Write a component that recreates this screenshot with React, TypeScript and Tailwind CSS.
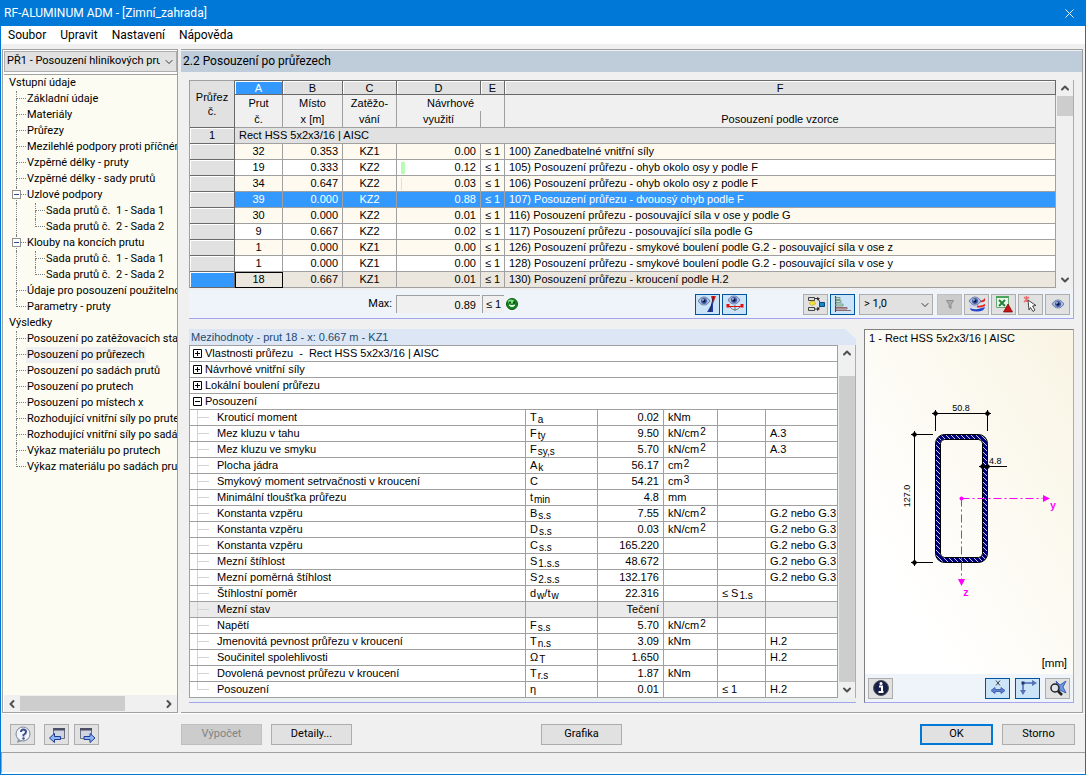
import type { ReactNode } from 'react'
import { ChevronDown, ChevronLeft, ChevronRight, ChevronUp, X } from 'lucide-react'
import clsx from 'clsx'

type TreeNode = { label: string; level: 0 | 1 | 2; last?: boolean; open?: boolean; selected?: boolean }

const tree: TreeNode[] = [
  { label: 'Vstupní údaje', level: 0 },
  { label: 'Základní údaje', level: 1 },
  { label: 'Materiály', level: 1 },
  { label: 'Průřezy', level: 1 },
  { label: 'Mezilehlé podpory proti příčnému vybočení', level: 1 },
  { label: 'Vzpěrné délky - pruty', level: 1 },
  { label: 'Vzpěrné délky - sady prutů', level: 1 },
  { label: 'Uzlové podpory', level: 1, open: true },
  { label: 'Sada prutů č.  1 - Sada 1', level: 2 },
  { label: 'Sada prutů č.  2 - Sada 2', level: 2, last: true },
  { label: 'Klouby na koncích prutu', level: 1, open: true },
  { label: 'Sada prutů č.  1 - Sada 1', level: 2 },
  { label: 'Sada prutů č.  2 - Sada 2', level: 2, last: true },
  { label: 'Údaje pro posouzení použitelnosti', level: 1 },
  { label: 'Parametry - pruty', level: 1, last: true },
  { label: 'Výsledky', level: 0 },
  { label: 'Posouzení po zatěžovacích stavech', level: 1 },
  { label: 'Posouzení po průřezech', level: 1, selected: true },
  { label: 'Posouzení po sadách prutů', level: 1 },
  { label: 'Posouzení po prutech', level: 1 },
  { label: 'Posouzení po místech x', level: 1 },
  { label: 'Rozhodující vnitřní síly po prutech', level: 1 },
  { label: 'Rozhodující vnitřní síly po sadách prutů', level: 1 },
  { label: 'Výkaz materiálu po prutech', level: 1 },
  { label: 'Výkaz materiálu po sadách prutů', level: 1, last: true },
]

const rows = [
  { member: 32, x: '0.353', lc: 'KZ1', ratio: '0.00', bar: 0, text: '100) Zanedbatelné vnitřní síly' },
  { member: 19, x: '0.333', lc: 'KZ2', ratio: '0.12', bar: 4, text: '105) Posouzení průřezu - ohyb okolo osy y podle F' },
  { member: 34, x: '0.647', lc: 'KZ2', ratio: '0.03', bar: 1, text: '106) Posouzení průřezu - ohyb okolo osy z podle F' },
  { member: 39, x: '0.000', lc: 'KZ2', ratio: '0.88', bar: 0, text: '107) Posouzení průřezu - dvouosý ohyb podle F' },
  { member: 30, x: '0.000', lc: 'KZ2', ratio: '0.01', bar: 0, text: '116) Posouzení průřezu - posouvající síla v ose y podle G' },
  { member: 9, x: '0.667', lc: 'KZ2', ratio: '0.02', bar: 0, text: '117) Posouzení průřezu - posouvající síla podle G' },
  { member: 1, x: '0.000', lc: 'KZ1', ratio: '0.00', bar: 0, text: '126) Posouzení průřezu - smykové boulení podle G.2 - posouvající síla v ose z' },
  { member: 1, x: '0.000', lc: 'KZ1', ratio: '0.00', bar: 0, text: '128) Posouzení průřezu - smykové boulení podle G.2 - posouvající síla v ose y' },
  { member: 18, x: '0.667', lc: 'KZ1', ratio: '0.01', bar: 0, text: '130) Posouzení průřezu - kroucení podle H.2' },
]

type Detail = { name: string; sym?: ReactNode; value: string; unit?: ReactNode; limit?: ReactNode; ref?: string; shaded?: boolean }

const Sub = ({ children }: { children: ReactNode }) => (
  <span className="relative top-0.5 ml-px text-[10px]">{children}</span>
)
const Sup = ({ children }: { children: ReactNode }) => (
  <span className="relative -top-0.5 ml-px text-[10px]">{children}</span>
)
const kNcm2 = <>kN/cm<Sup>2</Sup></>

const details: Detail[] = [
  { name: 'Krouticí moment', sym: <>T<Sub>a</Sub></>, value: '0.02', unit: 'kNm' },
  { name: 'Mez kluzu v tahu', sym: <>F<Sub>ty</Sub></>, value: '9.50', unit: kNcm2, ref: 'A.3' },
  { name: 'Mez kluzu ve smyku', sym: <>F<Sub>sy,s</Sub></>, value: '5.70', unit: kNcm2, ref: 'A.3' },
  { name: 'Plocha jádra', sym: <>A<Sub>k</Sub></>, value: '56.17', unit: <>cm<Sup>2</Sup></> },
  { name: 'Smykový moment setrvačnosti v kroucení', sym: 'C', value: '54.21', unit: <>cm<Sup>3</Sup></> },
  { name: 'Minimální tloušťka průřezu', sym: <>t<Sub>min</Sub></>, value: '4.8', unit: 'mm' },
  { name: 'Konstanta vzpěru', sym: <>B<Sub>s.s</Sub></>, value: '7.55', unit: kNcm2, ref: 'G.2 nebo G.3' },
  { name: 'Konstanta vzpěru', sym: <>D<Sub>s.s</Sub></>, value: '0.03', unit: kNcm2, ref: 'G.2 nebo G.3' },
  { name: 'Konstanta vzpěru', sym: <>C<Sub>s.s</Sub></>, value: '165.220', ref: 'G.2 nebo G.3' },
  { name: 'Mezní štíhlost', sym: <>S<Sub>1.s.s</Sub></>, value: '48.672', ref: 'G.2 nebo G.3' },
  { name: 'Mezní poměrná štíhlost', sym: <>S<Sub>2.s.s</Sub></>, value: '132.176', ref: 'G.2 nebo G.3' },
  { name: 'Štíhlostní poměr', sym: <>d<Sub>w</Sub>/t<Sub>w</Sub></>, value: '22.316', limit: <>≤ S<Sub>1.s</Sub></> },
  { name: 'Mezní stav', value: 'Tečení', shaded: true },
  { name: 'Napětí', sym: <>F<Sub>s.s</Sub></>, value: '5.70', unit: kNcm2 },
  { name: 'Jmenovitá pevnost průřezu v kroucení', sym: <>T<Sub>n.s</Sub></>, value: '3.09', unit: 'kNm', ref: 'H.2' },
  { name: 'Součinitel spolehlivosti', sym: <>Ω<Sub>T</Sub></>, value: '1.650', ref: 'H.2' },
  { name: 'Dovolená pevnost průřezu v kroucení', sym: <>T<Sub>r.s</Sub></>, value: '1.87', unit: 'kNm' },
  { name: 'Posouzení', sym: 'η', value: '0.01', limit: '≤ 1', ref: 'H.2' },
]

function IconButton({ label, active, disabled, children }: { label: string; active?: boolean; disabled?: boolean; children: ReactNode }) {
  return (
    <button
      type="button"
      aria-label={label}
      disabled={disabled}
      className={clsx(
        'flex h-[21px] w-[25px] shrink-0 items-center justify-center border',
        active && 'border-[#00549c] bg-[#cce4f7]',
        disabled && 'border-[#bfbfbf] bg-[#cccccc]',
        !active && !disabled && 'border-[#adadad] bg-[#e1e1e1]',
      )}
    >
      <svg width="20" height="18" viewBox="0 0 20 18" fill="none">
        {children}
      </svg>
    </button>
  )
}

function PushButton({ children, primary, disabled, wide }: { children: ReactNode; primary?: boolean; disabled?: boolean; wide?: boolean }) {
  return (
    <button
      type="button"
      disabled={disabled}
      className={clsx(
        'h-[21px] shrink-0',
        wide ? 'w-[81px]' : 'w-[73px]',
        primary ? 'border-2 border-[#0078d7] bg-[#e1e1e1]' : 'border',
        !primary && (disabled ? 'border-[#bfbfbf] bg-[#cccccc] text-[#838383]' : 'border-[#adadad] bg-[#e1e1e1]'),
      )}
    >
      {children}
    </button>
  )
}

function Eye({ x, y }: { x: number; y: number }) {
  return (
    <g transform={`translate(${x} ${y})`}>
      <path d="M0 4C2 1 4 0 6 0s4 1 6 4c-2 3-4 4-6 4S2 7 0 4z" fill="#a9bbdf" stroke="#5d6c98" strokeWidth=".8" />
      <circle cx="6" cy="4" r="3" fill="#3f5fae" />
      <circle cx="6" cy="4" r="1.500" fill="#0a1230" />
      <circle cx="5" cy="3" r=".8" fill="#fff" />
    </g>
  )
}

function Tree() {
  return (
    <ul className="min-h-0 flex-1 overflow-hidden bg-[#fcfcf3]">
      {tree.map((node, i) => (
        <li key={i} className={clsx('flex h-4 whitespace-pre leading-4', node.level === 0 ? 'pl-1' : 'pl-3')}>
          {node.level === 2 && <span className="w-[19px] shrink-0 border-l border-dotted border-[#808080]" />}
          {node.level > 0 && (
            <span className="relative w-[10px] shrink-0">
              <span className="block h-2 border-b border-l border-dotted border-[#808080]" />
              {!node.last && <span className="block h-2 border-l border-dotted border-[#808080]" />}
              {node.open && (
                <button type="button" aria-label="Sbalit" className="absolute -left-1 top-[3px] flex size-[9px] items-center justify-center border border-[#919191] bg-white">
                  <span className="h-px w-[5px] bg-[#2b4ba0]" />
                </button>
              )}
            </span>
          )}
          <a href="#" className={clsx('shrink-0 px-px', node.selected && 'bg-[#f0f0f0]')}>
            {node.label}
          </a>
        </li>
      ))}
    </ul>
  )
}

function VScroll({ thumb }: { thumb: 'short' | 'long' }) {
  return (
    <div className="ml-px flex w-4 shrink-0 flex-col items-center bg-[#f0f0f0] text-[#505050]">
      <ChevronUp size={12} strokeWidth={4} className="my-0.5 shrink-0" />
      {thumb === 'short' ? (
        <div className="h-5 w-full bg-[#cdcdcd]" />
      ) : (
        <div className="mt-[15px] w-full flex-1 bg-[#cdcdcd]" />
      )}
      {thumb === 'short' && <div className="flex-1" />}
      <ChevronDown size={12} strokeWidth={4} className="my-0.5 shrink-0" />
    </div>
  )
}

const letter = 'h-[15px] border-y border-r border-[#696969] font-normal leading-3 shadow-[inset_1px_1px_0_#fff]'
const head = 'border-r border-[#a0a0a0] bg-[#f0f0f0] font-normal leading-4'

function ResultsTable() {
  return (
    <table className="w-full min-w-0 flex-1 table-fixed border-separate border-spacing-0 border-l border-[#a0a0a0] text-center">
      <colgroup>
        <col className="w-[45px]" />
        <col className="w-[48px]" />
        <col className="w-[60px]" />
        <col className="w-[54px]" />
        <col className="w-[84px]" />
        <col className="w-[24px]" />
        <col />
      </colgroup>
      <thead>
        <tr>
          <th rowSpan={3} className="border border-l-0 border-[#a0a0a0] border-b-[#696969] border-r-[#696969] bg-[#e1e1e1] font-normal leading-[14px]">
            Průřez<br />č.
          </th>
          <th className={clsx(letter, 'bg-[#3399ff] text-white')}>A</th>
          {['B', 'C', 'D', 'E', 'F'].map((l) => (
            <th key={l} className={clsx(letter, 'bg-[#e1e1e1]')}>{l}</th>
          ))}
        </tr>
        <tr className="h-4">
          <th className={head}>Prut</th>
          <th className={head}>Místo</th>
          <th className={head}>Zatěžo-</th>
          <th colSpan={2} className={head}>Návrhové</th>
          <th className={head} />
        </tr>
        <tr className="h-4">
          <th className={clsx(head, 'border-b')}>č.</th>
          <th className={clsx(head, 'border-b')}>x [m]</th>
          <th className={clsx(head, 'border-b')}>vání</th>
          <th className={clsx(head, 'border-b')}>využití</th>
          <th className={clsx(head, 'border-b')} />
          <th className={clsx(head, 'border-b')}>Posouzení podle vzorce</th>
        </tr>
      </thead>
      <tbody>
        <tr className="h-4">
          <th className="border-b border-r border-[#696969] bg-[#e1e1e1] font-normal leading-[15px] shadow-[inset_1px_1px_0_#fff]">1</th>
          <td colSpan={6} className="border-b border-r border-[#a0a0a0] bg-[#e1e1e1] pl-1 text-left leading-[15px]">
            Rect HSS 5x2x3/16 | AISC
          </td>
        </tr>
        {rows.map((row, i) => {
          const marked = row.member === 39
          const current = row.member === 18
          const cell = clsx(
            'border-b border-r border-[#a0a0a0] leading-[15px]',
            marked ? 'bg-[#3399ff] text-white' : current ? 'bg-[#ebe7de]' : i % 2 ? 'bg-white' : 'bg-[#fffaf0]',
          )
          return (
            <tr key={i} className="h-4">
              <th className={clsx('border-b border-r border-[#696969] shadow-[inset_1px_1px_0_#fff]', current ? 'bg-[#3399ff]' : 'bg-[#e1e1e1]')} />
              <td className={clsx(cell, current && 'outline -outline-offset-1 outline-black')}>{row.member}</td>
              <td className={clsx(cell, 'pr-1 text-right')}>{row.x}</td>
              <td className={cell}>{row.lc}</td>
              <td className={clsx(cell, 'px-1 text-right')}>
                <div className="flex items-center justify-between">
                  <span className="h-3 bg-[#b6fbb6]" style={{ width: row.bar }} />
                  {row.ratio}
                </div>
              </td>
              <td className={cell}>≤ 1</td>
              <td className={clsx(cell, 'truncate pl-1 text-left')}>{row.text}</td>
            </tr>
          )
        })}
      </tbody>
    </table>
  )
}

function ResultsToolbar() {
  return (
    <div className="mt-0.5 flex h-[29px] items-center gap-0.5 border-b border-[#a5a5ee] bg-[#eff3fa] pr-[3px]">
      <label htmlFor="max" className="ui w-[205px] pr-0.5 text-right">Max:</label>
      <input id="max" readOnly value="0.89" className="h-[18px] w-[84px] border-l border-t border-[#a0a0a0] bg-[#f0f0f0] pr-1 text-right outline-none" />
      <span className="flex h-[18px] w-[22px] items-center justify-center border-l border-t border-[#a0a0a0] bg-[#f0f0f0]">≤ 1</span>
      <svg width="12" height="12" viewBox="0 0 12 12">
        <circle cx="6" cy="6" r="5.500" fill="#13851d" stroke="#0a5a12" />
        <ellipse cx="5" cy="3.500" rx="3" ry="2" fill="#7bdc7b" />
        <circle cx="4" cy="4.500" r=".9" fill="#032c06" />
        <circle cx="8" cy="4.500" r=".9" fill="#032c06" />
        <path d="M3 7q3 3.500 6 0-3 1.200-6 0z" fill="#fff" stroke="#fff" strokeWidth=".8" />
      </svg>
      <div className="flex-1" />
      <IconButton label="Barevné pozadí" active>
        <Eye x={0} y={2} />
        <path d="M13 1h5l-3 8z" fill="#e02020" />
        <path d="M15 7L9 17h6z" fill="#2440b8" />
        <path d="M15.500 1L12 17" stroke="#223" />
      </IconButton>
      <IconButton label="Zobrazit průběh" active>
        <Eye x={3} y={1} />
        <path d="M5 12q5 6 10 0M10 10v6" stroke="#777" />
        <path d="M1.500 9h3v3.500h-3zM15.500 9h3v3.500h-3z" fill="#e01010" />
        <path d="M4 11.500h12" stroke="#e01010" />
      </IconButton>
      <div className="w-[52px]" />
      <IconButton label="Řadit">
        <path d="M2.500 2.500h6v3h-6zM2.500 12.500h6v3h-6z" fill="#ddd" stroke="#444" />
        <path d="M4 7l2-1 3 1 .5 2-3.500 1.500L3.500 9z" fill="#f4e23c" stroke="#b8a824" strokeWidth=".6" />
        <path d="M9 3.500h3l2 4M9 14h3l2-3" stroke="#333" />
        <path d="M11 2l3 1.500-3 2zM11 12l3 2-3 2z" fill="#333" />
        <path d="M13.500 7.500h5v4h-5z" fill="#1687cf" stroke="#0b4a7a" />
      </IconButton>
      <IconButton label="Sloupce" active>
        <path d="M2.500 1v16" stroke="#345" />
        <path d="M3 2.500h4v2H3zM3 5.500h5v2H3zM3 9h7v2H3z" fill="#bde2ca" stroke="#7d9c90" />
        <path d="M3 12.500h11v1.500H3zM3 15.500h15" fill="#f0aaa8" stroke="#8b6a70" />
      </IconButton>
      <label className="ui relative mx-0.5 flex" aria-label="Filtr využití">
        <select className="h-[21px] w-[74px] appearance-none border border-[#adadad] bg-[#e1e1e1] pl-1">
          <option>&gt; 1,0</option>
        </select>
        <ChevronDown size={12} strokeWidth={1.5} className="pointer-events-none absolute right-0.5 top-[5px]" />
      </label>
      <IconButton label="Filtr" disabled>
        <path d="M6.500 5.500h7l-2.500 4v4l-2-1.500V9.500z" fill="#adadad" stroke="#8d8d8d" />
      </IconButton>
      <IconButton label="Barevná škála">
        <path d="M2 10q4-2 8 0t8-1v2.500q-4 2-8 1t-8 0z" fill="#c9d4f2" />
        <path d="M10 10.500q4 1 8-1.500v2q-4 2-8 1.500z" fill="#e22" />
        <path d="M3 13q4 2 8 1t7-2q-1 4.500-8 4.500T3 13z" fill="#2346cf" />
        <path d="M12 5q3 2 6-2v3q-3 2-6 1z" fill="#d22" />
        <Eye x={2} y={2} />
      </IconButton>
      <IconButton label="Export do Excelu">
        <path d="M2.500 1.500h12v11h-12z" fill="#e9f5ea" stroke="#6aa876" />
        <path d="M2 1h13v2H2z" fill="#4ca35a" />
        <path d="M5 5l6 6M11 5l-6 6" stroke="#23853a" strokeWidth="2" />
        <path d="M14 9l4.500 8h-9z" fill="#c81414" stroke="#6e0808" strokeWidth=".7" />
      </IconButton>
      <IconButton label="Vybrat prut">
        <path d="M3 2l5 5M8 2L3 7M5.500 1v6" stroke="#e8706c" strokeWidth="1.500" />
        <path d="M7 5l8 5.500-3.500.5 2.500 4-2 1.500-2.500-4L8 15z" fill="#fff" stroke="#444" />
      </IconButton>
      <IconButton label="Zobrazit">
        <Eye x={4} y={5} />
      </IconButton>
    </div>
  )
}

const groups = [
  { label: 'Vlastnosti průřezu  -  Rect HSS 5x2x3/16 | AISC', open: false },
  { label: 'Návrhové vnitřní síly', open: false },
  { label: 'Lokální boulení průřezu', open: false },
  { label: 'Posouzení', open: true },
]

function DetailsPanel() {
  const cell = 'whitespace-nowrap border-b border-r border-[#a0a0a0] pl-1 leading-[15px]'
  return (
    <section className="flex min-w-0 flex-1 flex-col border-b border-[#a5a5ee] bg-[#eaf0f0]">
      <div className="bg-[#f0f0f0]">
        <h2 className="h-4 bg-[#dce6f4] pl-0.5 leading-4 text-[#1c4a72] [clip-path:polygon(0_0,calc(100%-11px)_0,100%_10px,100%_100%,0_100%)]">
          Mezihodnoty - prut 18 - x: 0.667 m - KZ1
        </h2>
      </div>
      <div className="flex border-r border-[#a5a5ee]">
        <table className="w-full min-w-0 flex-1 table-fixed border-separate border-spacing-0 border-l border-t border-[#a0a0a0] bg-white">
          <colgroup>
            <col />
            <col className="w-[72px]" />
            <col className="w-[66px]" />
            <col className="w-[54px]" />
            <col className="w-[48px]" />
            <col className="w-[72px]" />
          </colgroup>
          <tbody>
            {groups.map((g) => (
              <tr key={g.label} className="h-4">
                <td colSpan={6} className="border-b border-r border-[#a0a0a0] leading-[15px]">
                  <div className="flex items-center whitespace-pre pl-[3px]">
                    <button type="button" aria-label={g.open ? 'Sbalit' : 'Rozbalit'} className="mr-[3px]">
                      <svg width="9" height="9" viewBox="0 0 9 9" fill="none" stroke="#000">
                        <path d={g.open ? 'M.5.5h8v8h-8zM2 4.500h5' : 'M.5.5h8v8h-8zM2 4.500h5M4.500 2v5'} />
                      </svg>
                    </button>
                    {g.label}
                  </div>
                </td>
              </tr>
            ))}
            {details.map((d, i) => (
              <tr key={i} className={clsx('h-4', d.shaded && 'bg-[#ebebeb]')}>
                <td className="border-b border-r border-[#a0a0a0] leading-[15px]">
                  <div className="flex h-[15px] pl-[7px]">
                    <span className={clsx('w-3 shrink-0 border-l border-[#d4d4d4]', i === details.length - 1 ? 'h-2' : 'h-[15px]')}>
                      <span className="block h-2 border-b border-[#d4d4d4]" />
                    </span>
                    <span className="truncate pl-2">{d.name}</span>
                  </div>
                </td>
                <td className={cell}>{d.sym}</td>
                <td className={clsx(cell, 'pr-1 text-right')}>{d.value}</td>
                <td className={cell}>{d.unit}</td>
                <td className={cell}>{d.limit}</td>
                <td className={cell}>{d.ref}</td>
              </tr>
            ))}
          </tbody>
        </table>
        <VScroll thumb="long" />
      </div>
    </section>
  )
}

function SectionDrawing() {
  return (
    <svg width="208" height="310" viewBox="0 17 208 310" fill="none" fontFamily="Liberation Sans, Arial, sans-serif" fontSize="9">
      <defs>
        <pattern id="hatch" width="5" height="5" patternUnits="userSpaceOnUse">
          <path d="M0 0h5v5H0z" fill="#00007c" />
          <path d="M-1-1l7 7M-1 4l2 2M4-1l2 2" stroke="#c4cdf0" />
        </pattern>
      </defs>
      <path
        d="M79.500 105.500h34a9 9 0 0 1 9 9v110a9 9 0 0 1-9 9h-34a9 9 0 0 1-9-9v-110a9 9 0 0 1 9-9zM79.500 110.500a4 4 0 0 0-4 4v110a4 4 0 0 0 4 4h34a4 4 0 0 0 4-4v-110a4 4 0 0 0-4-4z"
        fill="url(#hatch)"
        fillRule="evenodd"
        stroke="#000"
      />
      <g stroke="#000">
        <path d="M67 84.500h59M70.500 81v21M122.500 81v21M49.500 102v135M46 105.500h22M46 233.500h22M114 137.500h28" />
      </g>
      <g fill="#000">
        <path d="M67.500 84.500l3-3 3 3-3 3zM119.500 84.500l3-3 3 3-3 3zM46.500 105.500l3-3 3 3-3 3zM46.500 233.500l3-3 3 3-3 3zM114.500 137.500l3-3 3 3-3 3zM119.500 137.500l3-3 3 3-3 3z" />
        <text x="96" y="82" textAnchor="middle">50.8</text>
        <text x="124" y="135">4.8</text>
        <text x="45" y="167" textAnchor="middle" transform="rotate(-90 45 167)">127.0</text>
      </g>
      <g stroke="#f0f" strokeDasharray="8 3 2 3">
        <path d="M96.500 169.500h81M96.500 169.500v81" />
      </g>
      <g fill="#f0f" fontFamily="Liberation Mono, monospace" fontSize="10" fontWeight="bold">
        <circle cx="96.500" cy="169.500" r="2" />
        <path d="M178 166l7 3.500-7 3.500zM93 250h7l-3.500 7z" />
        <text x="185" y="180">y</text>
        <text x="98" y="267">z</text>
      </g>
    </svg>
  )
}

function SectionPanel() {
  return (
    <section className="flex w-[210px] shrink-0 flex-col border-b border-l border-r border-t border-b-[#a5a5ee] border-l-[#808080] border-r-[#a5a5ee] border-t-[#808080]">
      <div className="flex flex-1 flex-col bg-linear-to-tr from-white from-20% to-[#f9f4e3]">
        <h2 className="h-4 pl-1 leading-4">1 - Rect HSS 5x2x3/16 | AISC</h2>
        <SectionDrawing />
        <p className="ui pr-1.5 text-right leading-4">[mm]</p>
      </div>
      <div className="flex h-7 items-center gap-[5px] bg-[#eff3fa] px-[3px]">
        <IconButton label="Informace">
          <circle cx="10" cy="9" r="7.500" fill="#17204a" stroke="#555" />
          <path d="M8 7.500h3v5M7.500 13h5" stroke="#fff" strokeWidth="2" />
          <circle cx="10" cy="4.500" r="1.500" fill="#fff" />
        </IconButton>
        <div className="flex-1" />
        <IconButton label="Kóty" active>
          <path d="M8 1.500l4 5M12 1.500l-4 5" stroke="#444" />
          <path d="M3 11.500l4-3v2h6v-2l4 3-4 3v-2H7v2z" fill="#5b7fd6" stroke="#4a66ac" />
        </IconButton>
        <IconButton label="Osy" active>
          <path d="M5 14V4h11" stroke="#6a86c6" strokeWidth="2" />
          <path d="M14 1l5 3-5 3zM2 11h6l-3 5z" fill="#5473b8" />
          <path d="M3.500 2.500h3v3h-3z" fill="#26345e" />
        </IconButton>
        <IconButton label="Zobrazit vše">
          <path d="M8 2l4 4 6-4-3 6 3 6-6-3-3 2 1-5z" fill="#6e97e0" stroke="#3a60b8" />
          <circle cx="7" cy="9" r="4" fill="#dfe6ee" fillOpacity=".8" stroke="#222" strokeWidth="1.500" />
          <path d="M10 12l4 4" stroke="#222" strokeWidth="2.500" />
        </IconButton>
      </div>
    </section>
  )
}

function Sidebar() {
  return (
    <nav className="ui flex w-[176px] shrink-0 flex-col border-b border-l border-r border-t border-[#a0a0a0] bg-white pl-px pt-px">
      <label className="relative flex" aria-label="Případ posouzení">
        <select className="h-[21px] w-full appearance-none overflow-hidden border border-[#adadad] bg-[#e1e1e1] pl-0.5 pr-4">
          <option>PŘ1 - Posouzení hliníkových prutů</option>
        </select>
        <ChevronDown size={12} strokeWidth={1.5} className="pointer-events-none absolute right-0.5 top-[5px]" />
      </label>
      <div className="mt-0.5 flex min-h-0 flex-1 flex-col border-t border-[#a0a0a0]">
        <Tree />
        <div className="flex h-[17px] items-center bg-[#f0f0f0] text-[#505050]">
          <ChevronLeft size={12} strokeWidth={4} className="mx-0.5" />
          <div className="h-[15px] w-[105px] bg-[#cdcdcd]" />
          <div className="flex-1" />
          <ChevronRight size={12} strokeWidth={4} className="mx-0.5" />
        </div>
      </div>
    </nav>
  )
}

function Footer() {
  return (
    <footer className="ui">
      <div className="flex h-[39px] items-center border-t border-white pl-[9px] pr-2.5 pt-[3px]">
        <IconButton label="Nápověda">
          <circle cx="10" cy="8" r="7" fill="#f2f5fa" stroke="#7b8496" />
          <path d="M5 13l-1 4 5-2z" fill="#8d97aa" />
          <path d="M8 6q0-2.500 2.500-2.500T13 6q0 1.500-2.500 3v1.500" stroke="#3a4c8c" strokeWidth="2" />
          <circle cx="10.500" cy="12.500" r="1.200" fill="#3a4c8c" />
        </IconButton>
        <div className="ml-[9px] flex gap-[5px]">
          <IconButton label="Předchozí">
            <path d="M6.500 2.500h11v10h-11z" fill="#cfd5e0" stroke="#6b6f80" />
            <path d="M6 2h12v2.500H6z" fill="#4a4f66" />
            <path d="M2.500 12l5-4.500v3h6v3h-6v3z" fill="#8fb4f4" stroke="#1d3d96" />
          </IconButton>
          <IconButton label="Další">
            <path d="M3.500 2.500h11v10h-11z" fill="#cfd5e0" stroke="#6b6f80" />
            <path d="M3 2h12v2.500H3z" fill="#4a4f66" />
            <path d="M18 12l-5-4.500v3H7v3h6v3z" fill="#8fb4f4" stroke="#1d3d96" />
          </IconButton>
        </div>
        <div className="ml-[82px] flex gap-[9px]">
          <PushButton wide disabled>Výpočet</PushButton>
          <PushButton wide>Detaily...</PushButton>
        </div>
        <div className="ml-[189px] flex-1">
          <PushButton wide>Grafika</PushButton>
        </div>
        <div className="flex gap-[9px]">
          <PushButton primary>OK</PushButton>
          <PushButton>Storno</PushButton>
        </div>
      </div>
      <div className="h-[22px] border-l border-t border-b-2 border-[#a0a0a0] border-b-white" />
    </footer>
  )
}

export default function App() {
  return (
    <div className="flex min-h-screen flex-col border border-t-0 border-[#0078d7] bg-[#f0f0f0] font-['Liberation_Sans',Arial,sans-serif] text-[11px] text-black [&_.ui]:font-['Roboto',Tahoma,sans-serif]">
      <header className="ui flex h-[26px] items-center justify-between bg-[#0078d7] pl-[3px] pr-2 text-xs text-white">
        <h1>RF-ALUMINUM ADM - [Zimní_zahrada]</h1>
        <button type="button" aria-label="Zavřít">
          <X size={15} strokeWidth={1.5} />
        </button>
      </header>
      <nav className="ui mb-[5px] flex h-[18px] items-center gap-3.5 bg-white pl-[7px] text-xs">
        <button type="button">Soubor</button>
        <button type="button">Upravit</button>
        <button type="button">Nastavení</button>
        <button type="button">Nápověda</button>
      </nav>

      <div className="flex flex-1 gap-[3px] pl-px pr-0.5">
        <Sidebar />
        <main className="flex min-w-0 flex-1 flex-col border-b border-r border-t border-[#a0a0a0] pt-px">
          <h2 className="ui h-[21px] bg-[#bfcddb] pl-0.5 text-xs leading-[21px]">2.2 Posouzení po průřezech</h2>
          <div className="flex flex-1 flex-col gap-2.5 px-2 pb-[9px] pt-2">
            <section className="border-r border-[#a5a5ee]">
              <div className="flex">
                <ResultsTable />
                <VScroll thumb="short" />
              </div>
              <ResultsToolbar />
            </section>
            <div className="flex flex-1 gap-2">
              <DetailsPanel />
              <SectionPanel />
            </div>
          </div>
        </main>
      </div>
      <Footer />
    </div>
  )
}
